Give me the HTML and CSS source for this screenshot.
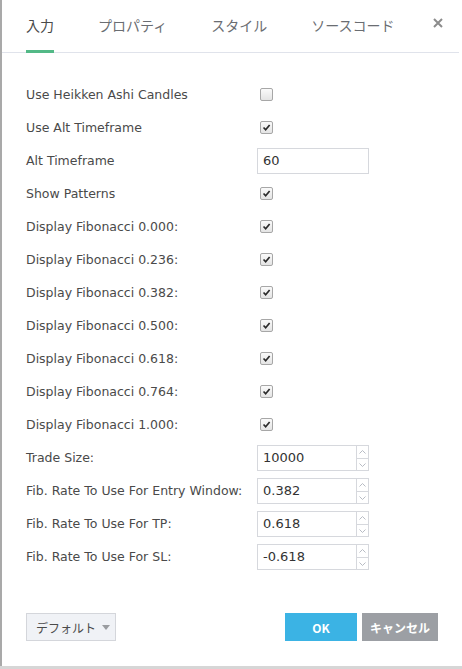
FILE: index.html
```html
<!DOCTYPE html>
<html>
<head>
<meta charset="utf-8">
<link rel="stylesheet" href="styles.css">
</head>
<body>
<div class="dialog">
  <div class="tabs">
    <div class="tab active">入力</div>
    <div class="tab">プロパティ</div>
    <div class="tab">スタイル</div>
    <div class="tab last">ソースコード</div>
    <div class="close"><svg width="10" height="10" viewBox="0 0 10 10"><path d="M1 1L9 9M9 1L1 9" stroke="#8c8c8c" stroke-width="2"/></svg></div>
  </div>
  <div class="content">
    <div class="row"><div class="label">Use Heikken Ashi Candles</div><span class="cb"></span></div>
    <div class="row"><div class="label">Use Alt Timeframe</div><span class="cb checked"><svg viewBox="0 0 13 13"><path d="M3 6.5L5.5 9.2L10.2 3.6" fill="none" stroke="#2a2a2a" stroke-width="2"/></svg></span></div>
    <div class="row"><div class="label">Alt Timeframe</div><div class="text-input">60</div></div>
    <div class="row"><div class="label">Show Patterns</div><span class="cb checked"><svg viewBox="0 0 13 13"><path d="M3 6.5L5.5 9.2L10.2 3.6" fill="none" stroke="#2a2a2a" stroke-width="2"/></svg></span></div>
    <div class="row"><div class="label">Display Fibonacci 0.000:</div><span class="cb checked"><svg viewBox="0 0 13 13"><path d="M3 6.5L5.5 9.2L10.2 3.6" fill="none" stroke="#2a2a2a" stroke-width="2"/></svg></span></div>
    <div class="row"><div class="label">Display Fibonacci 0.236:</div><span class="cb checked"><svg viewBox="0 0 13 13"><path d="M3 6.5L5.5 9.2L10.2 3.6" fill="none" stroke="#2a2a2a" stroke-width="2"/></svg></span></div>
    <div class="row"><div class="label">Display Fibonacci 0.382:</div><span class="cb checked"><svg viewBox="0 0 13 13"><path d="M3 6.5L5.5 9.2L10.2 3.6" fill="none" stroke="#2a2a2a" stroke-width="2"/></svg></span></div>
    <div class="row"><div class="label">Display Fibonacci 0.500:</div><span class="cb checked"><svg viewBox="0 0 13 13"><path d="M3 6.5L5.5 9.2L10.2 3.6" fill="none" stroke="#2a2a2a" stroke-width="2"/></svg></span></div>
    <div class="row"><div class="label">Display Fibonacci 0.618:</div><span class="cb checked"><svg viewBox="0 0 13 13"><path d="M3 6.5L5.5 9.2L10.2 3.6" fill="none" stroke="#2a2a2a" stroke-width="2"/></svg></span></div>
    <div class="row"><div class="label">Display Fibonacci 0.764:</div><span class="cb checked"><svg viewBox="0 0 13 13"><path d="M3 6.5L5.5 9.2L10.2 3.6" fill="none" stroke="#2a2a2a" stroke-width="2"/></svg></span></div>
    <div class="row"><div class="label">Display Fibonacci 1.000:</div><span class="cb checked"><svg viewBox="0 0 13 13"><path d="M3 6.5L5.5 9.2L10.2 3.6" fill="none" stroke="#2a2a2a" stroke-width="2"/></svg></span></div>
    <div class="row"><div class="label">Trade Size:</div><div class="num-input"><div class="val">10000</div><div class="spin"><span><svg viewBox="0 0 11 12"><path d="M2.5 7.5L5.5 4.5L8.5 7.5" fill="none" stroke="#b8bcc4"/></svg></span><span><svg viewBox="0 0 11 12"><path d="M2.5 4.5L5.5 7.5L8.5 4.5" fill="none" stroke="#b8bcc4"/></svg></span></div></div></div>
    <div class="row"><div class="label">Fib. Rate To Use For Entry Window:</div><div class="num-input"><div class="val">0.382</div><div class="spin"><span><svg viewBox="0 0 11 12"><path d="M2.5 7.5L5.5 4.5L8.5 7.5" fill="none" stroke="#b8bcc4"/></svg></span><span><svg viewBox="0 0 11 12"><path d="M2.5 4.5L5.5 7.5L8.5 4.5" fill="none" stroke="#b8bcc4"/></svg></span></div></div></div>
    <div class="row"><div class="label">Fib. Rate To Use For TP:</div><div class="num-input"><div class="val">0.618</div><div class="spin"><span><svg viewBox="0 0 11 12"><path d="M2.5 7.5L5.5 4.5L8.5 7.5" fill="none" stroke="#b8bcc4"/></svg></span><span><svg viewBox="0 0 11 12"><path d="M2.5 4.5L5.5 7.5L8.5 4.5" fill="none" stroke="#b8bcc4"/></svg></span></div></div></div>
    <div class="row"><div class="label">Fib. Rate To Use For SL:</div><div class="num-input"><div class="val">-0.618</div><div class="spin"><span><svg viewBox="0 0 11 12"><path d="M2.5 7.5L5.5 4.5L8.5 7.5" fill="none" stroke="#b8bcc4"/></svg></span><span><svg viewBox="0 0 11 12"><path d="M2.5 4.5L5.5 7.5L8.5 4.5" fill="none" stroke="#b8bcc4"/></svg></span></div></div></div>
  </div>
  <div class="footer">
    <div class="btn-default">デフォルト<span class="caret"></span></div>
    <div class="spacer"></div>
    <div class="btn btn-ok">OK</div>
    <div class="btn btn-cancel">キャンセル</div>
  </div>
</div>
</body>
</html>
```

FILE: styles.css
```css
html, body {
  margin: 0;
  padding: 0;
}
body {
  background: #d6d6d6;
  width: 462px;
  height: 669px;
  overflow: hidden;
  font-family: "DejaVu Sans", "Noto Sans CJK JP", sans-serif;
  color: #4a4a4a;
}
.dialog {
  box-sizing: border-box;
  width: 462px;
  height: 666px;
  background: #fff;
  border-left: 2px solid #a9a9a9;
  display: flex;
  flex-direction: column;
}
.tabs {
  display: flex;
  align-items: flex-start;
  height: 52px;
  border-bottom: 1px solid #e0e3eb;
  padding-left: 24px;
  margin-right: 3px;
  box-sizing: content-box;
}
.tab {
  font-family: "Noto Sans CJK JP", sans-serif;
  font-size: 14px;
  color: #6a6d72;
  line-height: 22px;
  padding-top: 14px;
  margin-right: 44px;
  box-sizing: border-box;
  border-bottom: 3px solid transparent;
  height: 53px;
  white-space: nowrap;
  flex-shrink: 0;
}
.tab.last { margin-right: 0; }
.tab.active {
  color: #4a4a4a;
  border-bottom-color: #53b987;
}
.close {
  margin-left: auto;
  margin-right: 16px;
  padding-top: 18px;
}
.close svg { display: block; }
.content {
  padding: 25px 0 0 24px;
  flex: 1;
}
.row {
  display: flex;
  align-items: center;
  height: 33px;
}
.label {
  width: 231px;
  flex-shrink: 0;
  white-space: nowrap;
  font-size: 12.5px;
  color: #4a4a4a;
}
.cb {
  box-sizing: border-box;
  width: 13px;
  height: 13px;
  margin-left: 3px;
  border: 1px solid #a7a7a7;
  border-radius: 2px;
  background: linear-gradient(#fafafa, #e4e4e4);
  display: block;
}
.cb svg {
  display: block;
  width: 11px;
  height: 11px;
}
.text-input {
  box-sizing: border-box;
  width: 112px;
  height: 26px;
  border: 1px solid #d6d8dd;
  padding-left: 5px;
  font-size: 13px;
  line-height: 24px;
  color: #333;
}
.num-input {
  display: flex;
  height: 26px;
}
.num-input .val {
  box-sizing: border-box;
  width: 100px;
  height: 26px;
  border: 1px solid #d6d8dd;
  padding-left: 5px;
  font-size: 13px;
  line-height: 24px;
  color: #333;
}
.spin {
  box-sizing: border-box;
  width: 12px;
  height: 26px;
  border: 1px solid #d6d8dd;
  border-left: none;
  display: flex;
  flex-direction: column;
}
.spin span {
  flex: 1;
  display: block;
}
.spin span + span { border-top: 1px solid #d6d8dd; }
.spin svg { display: block; width: 11px; height: 12px; }
.footer {
  display: flex;
  align-items: center;
  padding: 0 24px 25px 24px;
}
.spacer { flex: 1; }
.btn-default {
  box-sizing: border-box;
  height: 28px;
  width: 90px;
  background: #f0f2f6;
  border: 1px solid #d4d6db;
  font-family: "Noto Sans CJK JP", sans-serif;
  font-size: 12px;
  color: #4a4a4a;
  display: flex;
  align-items: center;
  padding-left: 9px;
  white-space: nowrap;
}
.caret {
  width: 0;
  height: 0;
  border-left: 4.5px solid transparent;
  border-right: 4.5px solid transparent;
  border-top: 5px solid #9a9ca0;
  margin-left: 6px;
}
.btn {
  height: 28px;
  display: flex;
  align-items: center;
  justify-content: center;
  color: #fff;
  font-family: "Noto Sans CJK JP", sans-serif;
  font-weight: 700;
  font-size: 12px;
  white-space: nowrap;
}
.btn-ok {
  width: 72px;
  background: #3bb3e4;
}
.btn-cancel {
  width: 76px;
  margin-left: 5px;
  background: #9c9fa4;
}
```
